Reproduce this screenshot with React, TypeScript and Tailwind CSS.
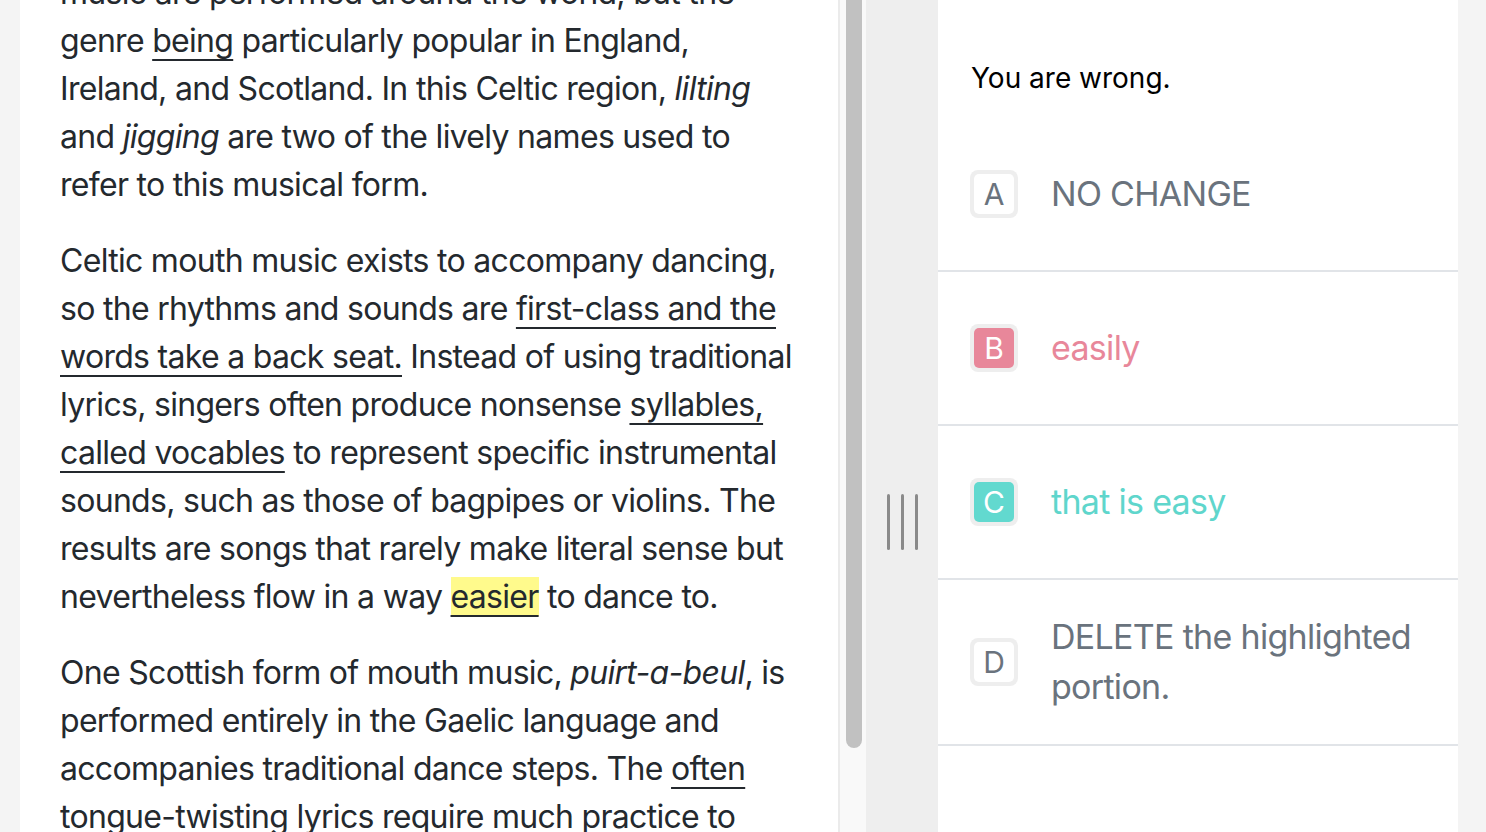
const ink = "text-[#24292e]";

function U({ children, hl }: { children: React.ReactNode; hl?: boolean }) {
  return (
    <span
      className={
        "underline decoration-2 underline-offset-[7px] decoration-[#24292e] " +
        (hl ? "bg-[#fffa8c]" : "")
      }
    >
      {children}
    </span>
  );
}

function Passage() {
  return (
    <div
      className={`mt-[-31px] flex flex-col gap-[28px] whitespace-nowrap text-[32px] leading-[48px] tracking-[-0.7px] ${ink}`}
    >
      <p>
        music are performed around the world, but the
        <br />
        genre <U>being</U> particularly popular in England,
        <br />
        Ireland, and Scotland. In this Celtic region, <i>lilting</i>
        <br />
        and <i>jigging</i> are two of the lively names used to
        <br />
        refer to this musical form.
      </p>
      <p>
        Celtic mouth music exists to accompany dancing,
        <br />
        so the rhythms and sounds are <U>first-class and the</U>
        <br />
        <U>words take a back seat.</U> Instead of using traditional
        <br />
        lyrics, singers often produce nonsense <U>syllables,</U>
        <br />
        <U>called vocables</U> to represent specific instrumental
        <br />
        sounds, such as those of bagpipes or violins. The
        <br />
        results are songs that rarely make literal sense but
        <br />
        nevertheless flow in a way <U hl>easier</U> to dance to.
      </p>
      <p>
        One Scottish form of mouth music, <i>puirt-a-beul</i>, is
        <br />
        performed entirely in the Gaelic language and
        <br />
        accompanies traditional dance steps. The <U>often</U>
        <br />
        tongue-twisting lyrics require much practice to
        <br />
        master, and performers must keep the beat steady.
      </p>
    </div>
  );
}

type Opt = { letter: string; text: string; tone: "plain" | "wrong" | "right" };

const options: Opt[] = [
  { letter: "A", text: "NO CHANGE", tone: "plain" },
  { letter: "B", text: "easily", tone: "wrong" },
  { letter: "C", text: "that is easy", tone: "right" },
  { letter: "D", text: "DELETE the highlighted portion.", tone: "plain" },
];

function OptionRow({ o }: { o: Opt }) {
  const inner =
    o.tone === "wrong"
      ? "bg-[#e8879a] text-white"
      : o.tone === "right"
      ? "bg-[#62d9cf] text-white"
      : "bg-white text-[#6a737d]";
  const label =
    o.tone === "wrong"
      ? "text-[#e8879a]"
      : o.tone === "right"
      ? "text-[#5fd6cc]"
      : "text-[#6a737d]";
  return (
    <div className="flex min-h-[154px] items-center gap-[33px] border-b-2 border-[#e1e4e8] py-8 pl-[32px] pr-6">
      <div className="flex h-12 w-12 shrink-0 items-center justify-center rounded-lg bg-[#eeeeee] p-1">
        <div className={`flex h-full w-full items-center justify-center rounded-[5px] text-[30px] ${inner}`}>
          {o.letter}
        </div>
      </div>
      <div className={`text-[34px] leading-[50px] tracking-[-0.7px] ${label}`}>{o.text}</div>
    </div>
  );
}

export default function App() {
  return (
    <div
      className="flex h-[832px] w-[1486px] overflow-hidden bg-[#f4f4f4] pl-5"
      style={{ fontFamily: "Inter, 'Noto Sans', sans-serif" }}
    >
      <section className="h-full w-[818px] shrink-0 overflow-hidden bg-white px-10">
        <Passage />
      </section>

      <div className="h-full w-[28px] shrink-0 border-l-2 border-[#ebebeb] bg-[#f9f9f9] pl-[6px]">
        <div className="h-[748px] w-4 rounded-b-full bg-[#c1c1c1]" />
      </div>

      <div className="flex h-full w-[72px] shrink-0 justify-center gap-[11px] bg-[#eeeeee] pt-[494px]">
        <div className="h-[56px] w-[3px] rounded-full bg-[#8a8a8a]" />
        <div className="h-[56px] w-[3px] rounded-full bg-[#8a8a8a]" />
        <div className="h-[56px] w-[3px] rounded-full bg-[#8a8a8a]" />
      </div>

      <section className="h-full w-[520px] shrink-0 bg-white">
        <div className="pl-[33px] pt-[60px] pb-[22px] text-[28px] leading-[36px] text-black">
          You are wrong.
        </div>
        {options.map((o) => (
          <OptionRow key={o.letter} o={o} />
        ))}
      </section>
    </div>
  );
}
